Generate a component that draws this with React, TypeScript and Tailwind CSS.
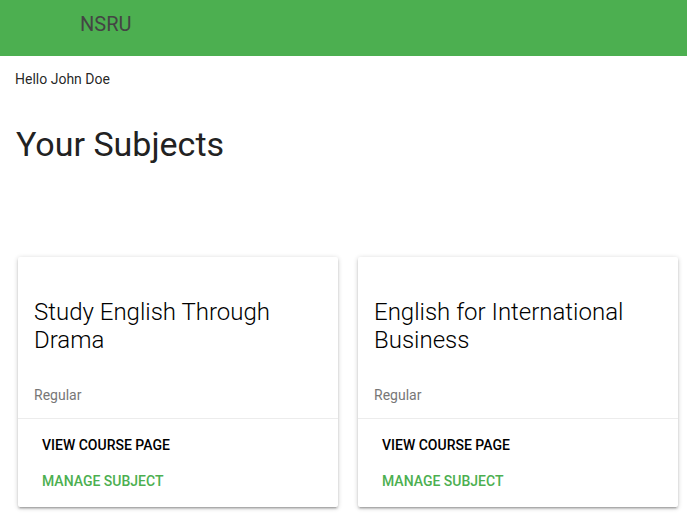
import React from "react";

const subjects = [
  { title: "Study English Through Drama", type: "Regular" },
  { title: "English for International Business", type: "Regular" },
];

export default function App() {
  return (
    <div className="min-h-[518px] bg-white font-['Roboto',sans-serif] text-[rgba(0,0,0,0.87)]">
      <nav className="h-14 bg-[#4caf50] flex items-start pt-[14px] pl-20">
        <span className="text-[20px] leading-5 text-[#444444]">NSRU</span>
      </nav>
      <div className="px-4">
        <p className="mt-[13px] text-[14px] leading-5 -ml-px">Hello John Doe</p>
        <h4 className="mt-[35px] text-[34px] leading-[40px] font-normal text-[#222]">Your Subjects</h4>
      </div>
      <div className="flex gap-5 px-[18px] mt-[93px]">
        {subjects.map((s) => (
          <div
            key={s.title}
            className="w-80 shrink-0 bg-white rounded-[2px] shadow-[0_2px_2px_0_rgba(0,0,0,0.14),0_3px_1px_-2px_rgba(0,0,0,0.12),0_1px_5px_0_rgba(0,0,0,0.2)]"
          >
            <div className="px-4 pt-[41px] pb-[13px]">
              <div className="text-[24px] leading-[28px] font-light text-black pr-6">{s.title}</div>
              <div className="mt-[31px] text-[14px] leading-5 text-[#777]">{s.type}</div>
            </div>
            <div className="border-t border-[rgba(160,160,160,0.2)] px-6 pt-[16px] pb-[16px] flex flex-col gap-4">
              <span className="text-[14px] leading-5 font-medium uppercase text-black">View Course Page</span>
              <span className="text-[14px] leading-5 font-medium uppercase text-[#4caf50]">Manage Subject</span>
            </div>
          </div>
        ))}
      </div>
    </div>
  );
}
